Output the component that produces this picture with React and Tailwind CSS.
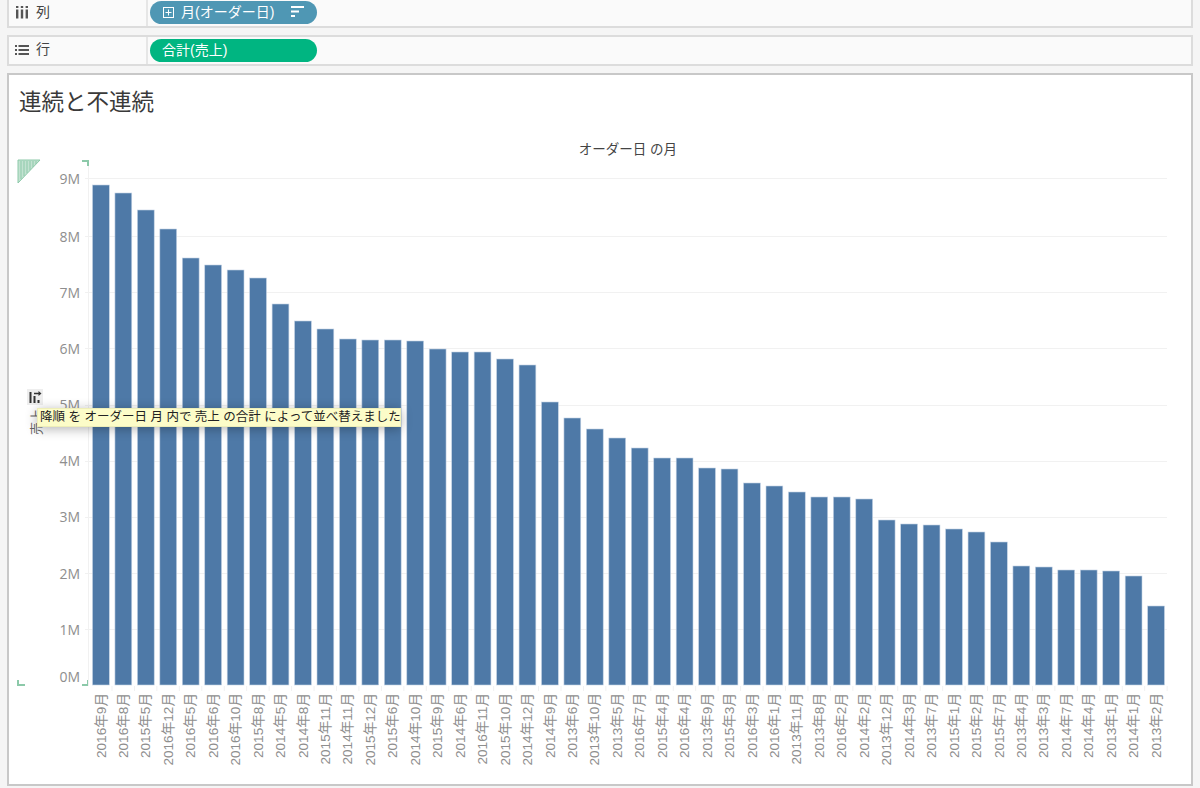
const FONT = '"Liberation Sans", "Noto Sans CJK JP", sans-serif';

const months = [
  ['2016年9月', 185], ['2016年8月', 193], ['2015年5月', 210], ['2016年12月', 229], ['2016年5月', 258], ['2016年6月', 265],
  ['2016年10月', 270], ['2015年8月', 278], ['2014年5月', 304], ['2014年8月', 321], ['2015年11月', 329], ['2014年11月', 339],
  ['2015年12月', 340], ['2015年6月', 340], ['2014年10月', 341], ['2015年9月', 349], ['2014年6月', 352], ['2016年11月', 352],
  ['2015年10月', 359], ['2014年12月', 365], ['2014年9月', 402], ['2013年6月', 418], ['2013年10月', 429], ['2013年5月', 438],
  ['2016年7月', 448], ['2015年4月', 458], ['2016年4月', 458], ['2013年9月', 468], ['2015年3月', 469], ['2016年3月', 483],
  ['2016年1月', 486], ['2013年11月', 492], ['2013年8月', 497], ['2016年2月', 497], ['2014年2月', 499], ['2013年12月', 520],
  ['2014年3月', 524], ['2013年7月', 525], ['2015年1月', 529], ['2015年2月', 532], ['2015年7月', 542], ['2013年4月', 566],
  ['2013年3月', 567], ['2014年7月', 570], ['2014年4月', 570], ['2013年1月', 571], ['2014年1月', 576], ['2013年2月', 606],
];

// label, gridline y, label baseline y (0M sits above the axis)
const ticks = [
  ['9M', 178, 184], ['8M', 236, 242], ['7M', 292, 298], ['6M', 348, 354], ['5M', 405, 410],
  ['4M', 461, 466], ['3M', 517, 522], ['2M', 573, 579], ['1M', 629, 635], ['0M', 685, 682],
];

function ColumnsIcon() {
  return (
    <svg width="14" height="14" viewBox="0 0 14 14" fill="#555">
      <rect x="1" y="1" width="2.4" height="2" />
      <rect x="1" y="4.5" width="2.4" height="9" />
      <rect x="5.8" y="1" width="2.4" height="2" />
      <rect x="5.8" y="4.5" width="2.4" height="9" />
      <rect x="10.6" y="1" width="2.4" height="2" />
      <rect x="10.6" y="4.5" width="2.4" height="9" />
    </svg>
  );
}

function RowsIcon() {
  return (
    <svg width="14" height="12" viewBox="0 0 14 12" fill="#555">
      <rect x="0" y="1" width="2" height="2" />
      <rect x="3.5" y="1" width="10.5" height="2" />
      <rect x="0" y="5" width="2" height="2" />
      <rect x="3.5" y="5" width="10.5" height="2" />
      <rect x="0" y="9" width="2" height="2" />
      <rect x="3.5" y="9" width="10.5" height="2" />
    </svg>
  );
}

function PlusBox() {
  return (
    <svg width="11" height="11" viewBox="0 0 11 11" fill="none" stroke="#fff" strokeWidth="1">
      <rect x="0.5" y="0.5" width="10" height="10" />
      <path d="M5.5 2.5v6M2.5 5.5h6" />
    </svg>
  );
}

function SortLines() {
  return (
    <svg width="13" height="12" viewBox="0 0 13 12" fill="#fff">
      <rect x="0" y="0" width="13" height="2" />
      <rect x="0" y="4.5" width="8" height="2" />
      <rect x="0" y="9" width="4" height="2" />
    </svg>
  );
}

function Shelf({ icon, label, className, children }) {
  return (
    <div className={`flex bg-[#fafafa] border-[#dcdcdc] border-x-2 border-b-2 ${className}`}>
      <div className="w-[139px] flex items-center gap-[7px] pl-[6px] pb-[2px] border-r-2 border-[#e6e6e6] text-[14px] text-[#444]">
        {icon}
        <span>{label}</span>
      </div>
      <div className="flex-1 flex items-center pl-[2px]">{children}</div>
    </div>
  );
}

function Chart() {
  return (
    <svg className="block w-full flex-1" viewBox="9 130 1182 654" style={{ fontFamily: FONT }}>
      <text x="628" y="153.5" textAnchor="middle" fontSize="13.5" fill="#444">オーダー日 の月</text>

      {/* drop target marks */}
      <path d="M18 160h22L18 183z" fill="#c3e2d1" stroke="#8cc9a9" />
      <path d="M21 161v18M24 161v15M27 161v12M30 161v9M33 161v6M36 161v3" stroke="#8cc9a9" />
      <path d="M82 161h6v5M18 680v5h7M88 680v5h-6" fill="none" stroke="#8cc9a9" strokeWidth="2" />

      {ticks.map(([label, y, base]) => (
        <g key={label}>
          {y < 685 && <line x1="85" x2="1167" y1={y + 0.5} y2={y + 0.5} stroke="#f1f1f1" />}
          <text x="80" y={base} textAnchor="end" fontSize="14" fill="#8e8e8e" style={{ fontFamily: '"Open Sans", sans-serif' }}>{label}</text>
        </g>
      ))}
      <line x1="88.5" x2="88.5" y1="166" y2="686" stroke="#f1f1f1" />

      {months.map(([label, top], i) => {
        const x = 92.5 + i * 22.45;
        return (
          <g key={label}>
            <line x1={x + 19.5} x2={x + 19.5} y1="686" y2="691" stroke="#f1f1f1" />
            <rect x={x} y={top} width="16.8" height={685 - top} fill="#4e79a7" stroke="#c3d2e4" strokeWidth="0.6" />
            <text
              transform={`translate(${x + 13} 693) rotate(-90)`}
              textAnchor="end"
              fontSize="13.6"
              fill="#8e8e8e"
            >
              {label}
            </text>
          </g>
        );
      })}

      <text transform="translate(41 422) rotate(-90)" textAnchor="middle" fontSize="13" fill="#666">売上</text>
    </svg>
  );
}

export default function App() {
  return (
    <div className="relative h-[788px] overflow-hidden bg-[#f5f5f5] px-[7px] flex flex-col" style={{ fontFamily: FONT }}>
      <Shelf icon={<ColumnsIcon />} label="列" className="h-[28px]">
        <div className="w-[167px] h-[23px] rounded-full bg-[#4f97b4] text-white text-[14px] flex items-center pl-[13px] pr-[13px] gap-[7px] -mt-[2px]">
          <PlusBox />
          <span className="flex-1">月(オーダー日)</span>
          <SortLines />
        </div>
      </Shelf>
      <Shelf icon={<RowsIcon />} label="行" className="h-[31px] mt-[7px] border-t-2">
        <div className="w-[167px] h-[23px] rounded-full bg-[#00b581] text-white text-[14px] flex items-center pl-[12px]">
          合計(売上)
        </div>
      </Shelf>

      <div className="relative mt-[7px] h-[713px] bg-white border-2 border-[#c8c8c8] flex flex-col">
        <div className="h-[55px] shrink-0 pl-[10px] pt-[13px] text-[22.5px] leading-[30px] text-[#3a3a3a]">連続と不連続</div>
        <Chart />

        {/* sort hover button */}
        <div className="absolute left-[18px] top-[314px] w-[16px] h-[16px] bg-[#eeeeee] flex items-center justify-center">
          <svg width="14" height="13" viewBox="0 0 14 13" fill="#333">
            <rect x="1.5" y="1" width="2" height="11" />
            <rect x="5.5" y="5" width="2" height="7" />
            <rect x="9.5" y="9" width="2" height="3" />
            <path d="M6 1.8h4.5V0l3 2.5-3 2.5V3.2H6z" />
          </svg>
        </div>

        {/* sort tooltip */}
        <div className="absolute left-[28px] top-[333px] h-[19px] w-[364px] bg-[#fcfcc8] border border-[#eeeeb8] shadow-[0_2px_12px_rgba(0,0,0,0.3)] text-[12.5px] leading-[17px] text-[#222] whitespace-nowrap pl-[2px]">
          降順 を オーダー日 月 内で 売上 の合計 によって並べ替えました
        </div>
      </div>
    </div>
  );
}
